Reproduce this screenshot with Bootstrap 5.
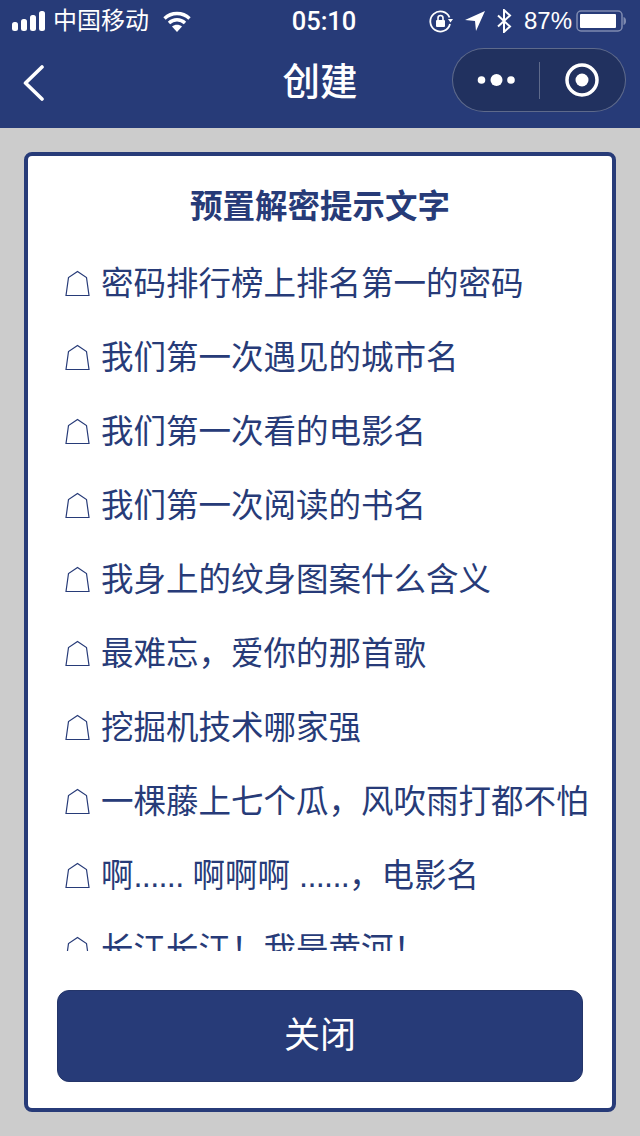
<!DOCTYPE html>
<html lang="zh">
<head>
    <meta charset="UTF-8">
    <meta name="viewport" content="width=device-width, initial-scale=1.0">
    <title>创建</title>
    <link href="https://cdn.jsdelivr.net/npm/bootstrap@5.3.0/dist/css/bootstrap.min.css" rel="stylesheet">
    <style>
        html, body {
            height: 1136px;
            overflow: hidden;
        }

        body {
            background-color: #cccccc;
            font-family: "Liberation Sans", "Noto Sans CJK SC", sans-serif;
            color: #273b78;
        }

        .top-head {
            height: 128px;
            background-color: #273b78;
            color: #fff;
        }

        .status-bar {
            height: 42px;
            padding: 0 14px 0 12px;
            font-size: 24px;
            line-height: 42px;
        }

        .carrier {
            font-size: 24px;
            margin-left: 7px;
            margin-right: 14px;
        }

        .clock {
            left: 8px;
            right: 0;
            top: 0;
            text-align: center;
            font-family: Roboto, "Liberation Sans", sans-serif;
            font-size: 25.500px;
            font-weight: 500;
        }

        .status-gap {
            margin-right: 12px;
        }

        .nav-row {
            height: 86px;
            padding: 0 14px 0 23px;
        }

        .nav-title {
            left: 0;
            right: 0;
            top: 15px;
            text-align: center;
            font-size: 37.500px;
            line-height: 50px;
            font-weight: 500;
        }

        .nav-back {
            margin-bottom: 4px;
        }

        .capsule {
            width: 174px;
            height: 64px;
            margin-bottom: 10px;
            border: 1px solid rgba(255, 255, 255, .28);
            border-radius: 32px;
            background-color: #21315f;
        }

        .capsule-part {
            width: 87px;
        }

        .capsule-line {
            width: 1px;
            height: 37px;
            background-color: rgba(255, 255, 255, .28);
        }

        .pop-card {
            height: 960px;
            margin: 24px 24px 0;
            background-color: #fff;
            border: 4px solid #273b78;
            border-radius: 8px;
        }

        .pop-title {
            height: 90px;
            padding-top: 26px;
            font-size: 32.500px;
            line-height: 50px;
            font-weight: 700;
            text-align: center;
        }

        .hint-list {
            height: 705px;
            overflow: hidden;
            padding-left: 37px;
        }

        .hint-row {
            height: 74px;
            font-size: 32.500px;
            white-space: nowrap;
        }

        .hint-row svg {
            margin-right: 11px;
            flex-shrink: 0;
        }

        .hint-text {
            position: relative;
            top: 1px;
        }

        .hint-dots {
            letter-spacing: -.7px;
        }

        .close-btn {
            width: 526px;
            height: 92px;
            margin: 39px auto 0;
            font-size: 36px;
            line-height: 1.6;
            color: #fff;
            background-color: #273b78;
            border: 1px solid #243569;
            border-radius: 12px;
        }
    </style>
</head>
<body>
    <!-- En-tête -->
    <header class="top-head">
        <div class="status-bar d-flex align-items-center position-relative">
            <svg width="34" height="20" viewBox="0 0 34 20" fill="#fff">
                <rect x="0" y="11" width="6" height="9" rx="2.500"/>
                <rect x="9" y="8" width="6" height="12" rx="2.500"/>
                <rect x="18" y="4" width="6" height="16" rx="2.500"/>
                <rect x="27" y="0" width="6" height="20" rx="2.500"/>
            </svg>
            <span class="carrier">中国移动</span>
            <svg width="28" height="21" viewBox="0 0 28 21" fill="none" stroke="#fff" stroke-width="3.400">
                <path d="M1.500 7.500C8.500 .8 19.500 .8 26.500 7.500"/>
                <path d="M6 12c4.600-4.300 11.400-4.300 16 0"/>
                <path d="M14 21l-5-5.500c2.800-2.400 7.200-2.400 10 0z" fill="#fff" stroke="none"/>
            </svg>
            <div class="clock position-absolute">05:10</div>
            <div class="ms-auto d-flex align-items-center">
                <svg width="24" height="24" viewBox="0 0 24 24" fill="none" stroke="#fff" stroke-width="1.800" class="status-gap">
                    <path d="M20.500 8.500A10 10 0 1 0 21 15"/>
                    <path d="M19 10h5l-2.500 3.500z" fill="#fff" stroke="none"/>
                    <rect x="7" y="11" width="9" height="7" rx="1" fill="#fff" stroke="none"/>
                    <path d="M9 11V9a2.500 2.500 0 0 1 5 0v2" stroke-width="1.600"/>
                </svg>
                <svg width="20" height="20" viewBox="0 0 20 20" fill="#fff" class="status-gap">
                    <path d="M20 0L11 20 10 10 0 9z"/>
                </svg>
                <svg width="15" height="24" viewBox="0 0 15 24" fill="none" stroke="#fff" stroke-width="2" class="status-gap">
                    <path d="M1 6.500l12 11-6 5.500V1l6 5.500-12 11"/>
                </svg>
                <span>87%</span>
                <svg width="50" height="22" viewBox="0 0 50 22" class="ms-1">
                    <rect x="1" y="1" width="45" height="20" rx="4" fill="none" stroke="#7f8bb0" stroke-width="1.500"/>
                    <rect x="4" y="4" width="36" height="14" rx="1" fill="#fff"/>
                    <path d="M47.500 7c1.800.5 2.500 2 2.500 4s-.7 3.500-2.500 4z" fill="#7f8bb0"/>
                </svg>
            </div>
        </div>
        <div class="nav-row d-flex align-items-center justify-content-between position-relative">
            <svg width="22" height="36" viewBox="0 0 22 36" fill="none" stroke="#fff" stroke-width="3.600" stroke-linecap="round" stroke-linejoin="round" class="nav-back">
                <path d="M19 2L2.500 18 19 34"/>
            </svg>
            <div class="nav-title position-absolute">创建</div>
            <div class="capsule d-flex align-items-center position-relative">
                <div class="capsule-part d-flex justify-content-center">
                    <svg width="38" height="14" viewBox="0 0 38 14" fill="#fff">
                        <circle cx="4.500" cy="7" r="3.800"/>
                        <circle cx="19.500" cy="7" r="6"/>
                        <circle cx="34" cy="7" r="3.800"/>
                    </svg>
                </div>
                <div class="capsule-line"></div>
                <div class="capsule-part d-flex justify-content-center">
                    <svg width="34" height="34" viewBox="0 0 34 34">
                        <circle cx="17" cy="17" r="15" fill="none" stroke="#fff" stroke-width="3.500"/>
                        <circle cx="17" cy="17" r="6.500" fill="#fff"/>
                    </svg>
                </div>
            </div>
        </div>
    </header>

    <!-- Carte -->
    <div class="pop-card">
        <div class="pop-title">预置解密提示文字</div>
        <div class="hint-list" id="hints"></div>
        <button type="button" class="btn close-btn d-block">关闭</button>
    </div>

    <script>
        const hints = [
            '密码排行榜上排名第一的密码',
            '我们第一次遇见的城市名',
            '我们第一次看的电影名',
            '我们第一次阅读的书名',
            '我身上的纹身图案什么含义',
            '最难忘，爱你的那首歌',
            '挖掘机技术哪家强',
            '一棵藤上七个瓜，风吹雨打都不怕',
            '啊<span class="hint-dots">......</span> 啊啊啊 <span class="hint-dots">......</span>，电影名',
            '长江长江！我是黄河！'
        ];
        const list = document.getElementById('hints');
        hints.forEach(text => {
            list.innerHTML += `
                <div class="hint-row d-flex align-items-center">
                    <svg width="25" height="27" viewBox="0 0 25 27" fill="none" stroke="#273b78" stroke-width="1.200">
                        <path d="M1 25.500L3.500 7.500 12.500 1.500 21.500 7.500 24 25.500z"/>
                    </svg>
                    <span class="hint-text">${text}</span>
                </div>
            `;
        });
    </script>
    <script src="https://cdn.jsdelivr.net/npm/bootstrap@5.3.0/dist/js/bootstrap.bundle.min.js"></script>
</body>
</html>
